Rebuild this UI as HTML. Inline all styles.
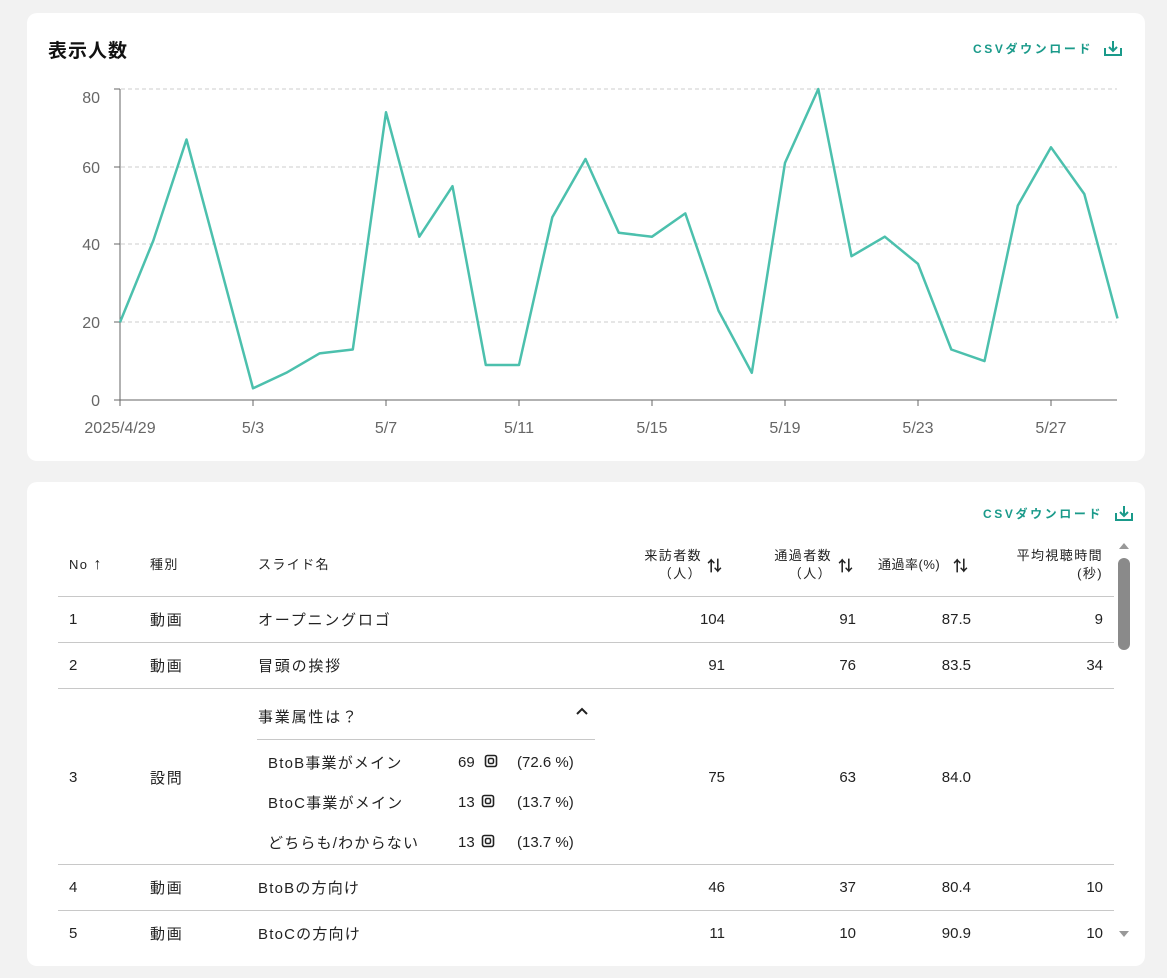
<!DOCTYPE html>
<html><head><meta charset="utf-8"><style>
*{margin:0;padding:0;box-sizing:border-box}
body{width:1167px;height:978px;background:#f2f2f2;font-family:"Liberation Sans","Noto Sans CJK JP",sans-serif;color:#222;position:relative;overflow:hidden}
.card{position:absolute;background:#fff;border-radius:10px}
.a{position:absolute;white-space:nowrap}
.csv{color:#1a9a8a;font-size:12px;font-weight:bold;letter-spacing:2.6px}
.t{font-size:15px;line-height:20px;letter-spacing:1.8px;margin-top:2px}
.n{font-size:15px;line-height:20px;margin-top:3px}
.h{font-size:13px;line-height:18px;letter-spacing:1.4px}
.r{text-align:right}
.line{position:absolute;left:58px;width:1056px;height:1px;background:#c8c8c8}
</style></head><body>
<div class="card" style="left:27px;top:13px;width:1118px;height:448px"></div>
<div class="card" style="left:27px;top:482px;width:1118px;height:484px"></div>

<div class="a" style="left:48px;top:36px;font-size:19px;font-weight:bold;color:#111;letter-spacing:1px">表示人数</div>
<div class="a csv" style="left:973px;top:40px">CSVダウンロード</div>
<svg class="a" style="left:1103px;top:39px" width="20" height="18" viewBox="0 0 20 18" fill="none" stroke="#1a9a8a" stroke-width="2"><path d="M2 9v7h16V9M10 2v9M6 8l4 4 4-4"/></svg>

<svg class="a" style="left:0;top:0" width="1167" height="460">
<g stroke="#ccc" stroke-dasharray="4 3" stroke-width="1">
<line x1="121" x2="1117" y1="89" y2="89"/><line x1="121" x2="1117" y1="167" y2="167"/><line x1="121" x2="1117" y1="244" y2="244"/><line x1="121" x2="1117" y1="322" y2="322"/>
</g>
<line x1="120" y1="89" x2="120" y2="406" stroke="#666"/>
<line x1="114" y1="400" x2="1117" y2="400" stroke="#666"/>
<g stroke="#666"><line x1="114" x2="120" y1="89" y2="89"/><line x1="114" x2="120" y1="167" y2="167"/><line x1="114" x2="120" y1="244" y2="244"/><line x1="114" x2="120" y1="322" y2="322"/>
<line x1="253" x2="253" y1="400" y2="406"/><line x1="386" x2="386" y1="400" y2="406"/><line x1="519" x2="519" y1="400" y2="406"/><line x1="652" x2="652" y1="400" y2="406"/><line x1="785" x2="785" y1="400" y2="406"/><line x1="918" x2="918" y1="400" y2="406"/><line x1="1051" x2="1051" y1="400" y2="406"/></g>
<g font-family="Liberation Sans,sans-serif" font-size="16" fill="#666" text-anchor="end">
<text x="100" y="103">80</text><text x="100" y="173">60</text><text x="100" y="250">40</text><text x="100" y="328">20</text><text x="100" y="406">0</text></g>
<g font-family="Liberation Sans,sans-serif" font-size="16" fill="#666" text-anchor="middle">
<text x="120" y="433">2025/4/29</text><text x="253" y="433">5/3</text><text x="386" y="433">5/7</text><text x="519" y="433">5/11</text><text x="652" y="433">5/15</text><text x="785" y="433">5/19</text><text x="918" y="433">5/23</text><text x="1051" y="433">5/27</text></g>
<polyline id="pl" fill="none" stroke="#4cc0ad" stroke-width="2.5" stroke-linejoin="round" points=""/>
</svg>
<script>
var v=[20,41,67,35,3,7,12,13,74,42,55,9,9,47,62,43,42,48,23,7,61,80,37,42,35,13,10,50,65,53,21];
document.getElementById('pl').setAttribute('points',v.map(function(d,i){return (120+i*33.25).toFixed(1)+','+(400-d*3.8875).toFixed(1)}).join(' '));
</script>

<div class="a csv" style="left:983px;top:505px">CSVダウンロード</div>
<svg class="a" style="left:1114px;top:504px" width="20" height="18" viewBox="0 0 20 18" fill="none" stroke="#1a9a8a" stroke-width="2"><path d="M2 9v7h16V9M10 2v9M6 8l4 4 4-4"/></svg>

<div class="a h" style="left:69px;top:556px">No <span style="font-size:16px">↑</span></div>
<div class="a h" style="left:150px;top:556px">種別</div>
<div class="a h" style="left:258px;top:556px">スライド名</div>
<div class="a h r" style="right:465px;top:547px">来訪者数<br>（人）</div><div class="a" style="left:707px;top:555px;font-size:15px;font-weight:bold">⇅</div>
<div class="a h r" style="right:335px;top:547px">通過者数<br>（人）</div><div class="a" style="left:838px;top:555px;font-size:15px;font-weight:bold">⇅</div>
<div class="a h" style="left:878px;top:556px;letter-spacing:0.5px">通過率(%)</div><div class="a" style="left:953px;top:555px;font-size:15px;font-weight:bold">⇅</div>
<div class="a h r" style="right:64px;top:547px">平均視聴時間<br>(秒)</div>

<div class="line" style="top:596px"></div>
<div class="line" style="top:642px"></div>
<div class="line" style="top:688px"></div>
<div class="line" style="top:864px"></div>
<div class="line" style="top:910px"></div>

<div class="a n" style="left:69px;top:607px">1</div><div class="a t" style="left:150px;top:609px">動画</div><div class="a t" style="left:258px;top:609px">オープニングロゴ</div>
<div class="a n r" style="right:442px;top:607px">104</div><div class="a n r" style="right:311px;top:607px">91</div><div class="a n r" style="right:196px;top:607px">87.5</div><div class="a n r" style="right:64px;top:607px">9</div>

<div class="a n" style="left:69px;top:653px">2</div><div class="a t" style="left:150px;top:655px">動画</div><div class="a t" style="left:258px;top:655px">冒頭の挨拶</div>
<div class="a n r" style="right:442px;top:653px">91</div><div class="a n r" style="right:311px;top:653px">76</div><div class="a n r" style="right:196px;top:653px">83.5</div><div class="a n r" style="right:64px;top:653px">34</div>

<div class="a n" style="left:69px;top:765px">3</div><div class="a t" style="left:150px;top:767px">設問</div>
<div class="a t" style="left:258px;top:706px">事業属性は？</div>
<svg class="a" style="left:575px;top:706px" width="14" height="10"><path d="M2 8l5-5 5 5" fill="none" stroke="#222" stroke-width="2"/></svg>
<div class="a" style="left:257px;top:739px;width:338px;height:1px;background:#c8c8c8"></div>
<div class="a t" style="left:268px;top:752px;letter-spacing:1.2px">BtoB事業がメイン</div><div class="a n" style="left:458px;top:750px">69</div><div class="a n" style="left:517px;top:750px">(72.6 %)</div>
<div class="a t" style="left:268px;top:792px;letter-spacing:1.2px">BtoC事業がメイン</div><div class="a n" style="left:458px;top:790px">13</div><div class="a n" style="left:517px;top:790px">(13.7 %)</div>
<div class="a t" style="left:268px;top:832px;letter-spacing:1.2px">どちらも/わからない</div><div class="a n" style="left:458px;top:830px">13</div><div class="a n" style="left:517px;top:830px">(13.7 %)</div>
<svg class="a" style="left:484px;top:754px" width="14" height="14"><rect x="1.5" y="1.5" width="11" height="11" rx="2" fill="none" stroke="#222" stroke-width="1.6"/><rect x="4.5" y="4.5" width="5" height="5" rx="1.5" fill="none" stroke="#222" stroke-width="1.5"/></svg>
<svg class="a" style="left:481px;top:794px" width="14" height="14"><rect x="1.5" y="1.5" width="11" height="11" rx="2" fill="none" stroke="#222" stroke-width="1.6"/><rect x="4.5" y="4.5" width="5" height="5" rx="1.5" fill="none" stroke="#222" stroke-width="1.5"/></svg>
<svg class="a" style="left:481px;top:834px" width="14" height="14"><rect x="1.5" y="1.5" width="11" height="11" rx="2" fill="none" stroke="#222" stroke-width="1.6"/><rect x="4.5" y="4.5" width="5" height="5" rx="1.5" fill="none" stroke="#222" stroke-width="1.5"/></svg>
<div class="a n r" style="right:442px;top:765px">75</div><div class="a n r" style="right:311px;top:765px">63</div><div class="a n r" style="right:196px;top:765px">84.0</div>

<div class="a n" style="left:69px;top:875px">4</div><div class="a t" style="left:150px;top:877px">動画</div><div class="a t" style="left:258px;top:877px;letter-spacing:1.2px">BtoBの方向け</div>
<div class="a n r" style="right:442px;top:875px">46</div><div class="a n r" style="right:311px;top:875px">37</div><div class="a n r" style="right:196px;top:875px">80.4</div><div class="a n r" style="right:64px;top:875px">10</div>

<div class="a n" style="left:69px;top:921px">5</div><div class="a t" style="left:150px;top:923px">動画</div><div class="a t" style="left:258px;top:923px;letter-spacing:1.2px">BtoCの方向け</div>
<div class="a n r" style="right:442px;top:921px">11</div><div class="a n r" style="right:311px;top:921px">10</div><div class="a n r" style="right:196px;top:921px">90.9</div><div class="a n r" style="right:64px;top:921px">10</div>

<svg class="a" style="left:1117px;top:540px" width="14" height="404"><path d="M2 9l5-6 5 6z" fill="#999"/><rect x="1" y="18" width="12" height="92" rx="6" fill="#8a8a8a"/><path d="M2 391l5 6 5-6z" fill="#999"/></svg>
</body></html>
